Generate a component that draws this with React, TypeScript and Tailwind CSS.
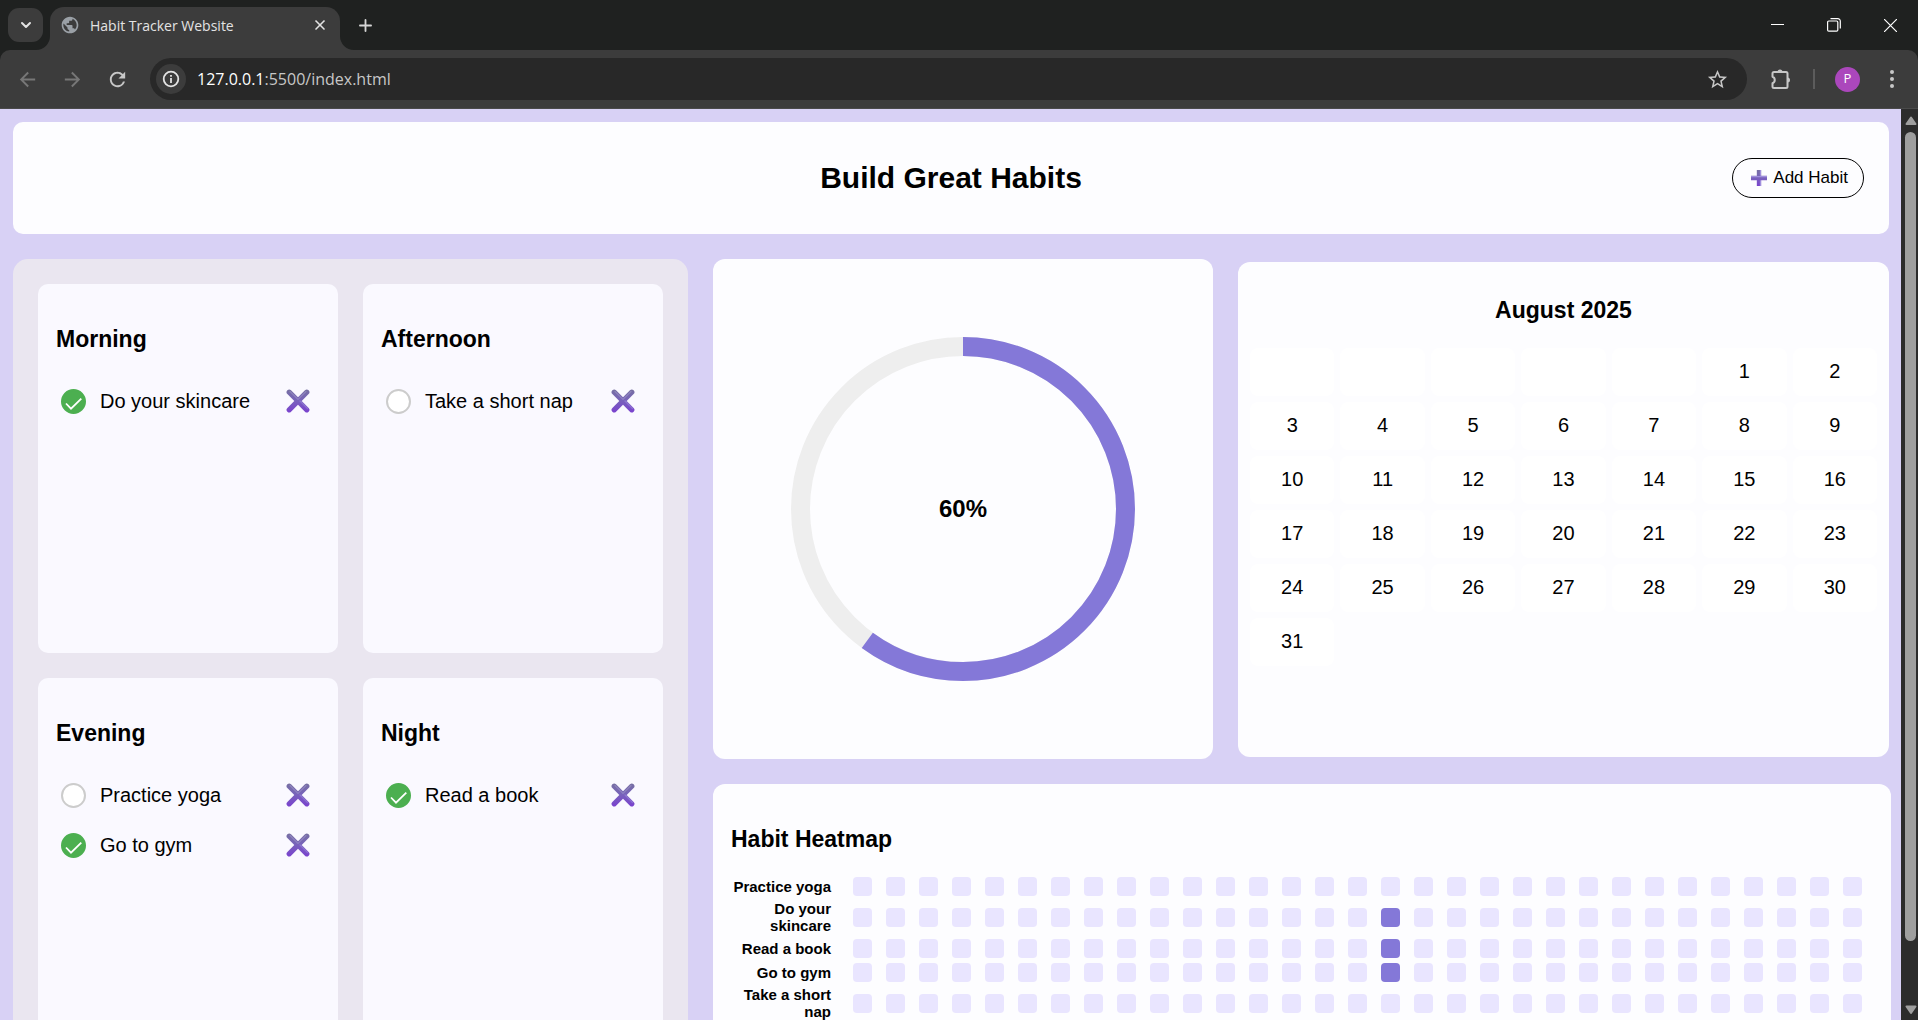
import React, { useState } from "react";
import { ChevronDown, Plus, X } from "lucide-react";
import { MdArrowBack, MdArrowForward, MdPublic, MdRefresh, MdStarBorder } from "react-icons/md";

type Habit = { name: string; done: boolean };
type Period = { title: string; habits: Habit[] };

const PERIODS: Period[] = [
  { title: "Morning", habits: [{ name: "Do your skincare", done: true }] },
  { title: "Afternoon", habits: [{ name: "Take a short nap", done: false }] },
  {
    title: "Evening",
    habits: [
      { name: "Practice yoga", done: false },
      { name: "Go to gym", done: true },
    ],
  },
  { title: "Night", habits: [{ name: "Read a book", done: true }] },
];

const HEATMAP: { name: string; filled: number[] }[] = [
  { name: "Practice yoga", filled: [] },
  { name: "Do your skincare", filled: [17] },
  { name: "Read a book", filled: [17] },
  { name: "Go to gym", filled: [17] },
  { name: "Take a short nap", filled: [] },
];

const DAYS = Array.from({ length: 31 }, (_, i) => i + 1);

function calendarWeeks(offset: number, total: number) {
  const cells: (number | null)[] = [];
  for (let i = 0; i < offset; i++) cells.push(null);
  for (let d = 1; d <= total; d++) cells.push(d);
  const weeks: (number | null)[][] = [];
  for (let i = 0; i < cells.length; i += 7) weeks.push(cells.slice(i, i + 7));
  return weeks;
}

function GradientDefs() {
  return (
    <svg width="0" height="0" className="absolute" aria-hidden="true">
      <defs>
        <linearGradient id="violet" gradientUnits="userSpaceOnUse" x1="0" y1="0" x2="0" y2="24">
          <stop offset="0" stopColor="#7670a0" />
          <stop offset="0.45" stopColor="#7864ba" />
          <stop offset="1" stopColor="#7a40d0" />
        </linearGradient>
      </defs>
    </svg>
  );
}

function CrossIcon() {
  return (
    <svg width="24" height="24" viewBox="0 0 24 24" fill="none" strokeLinecap="round" aria-hidden="true">
      <path d="M3.2 3.2 20.8 20.8M20.8 3.2 3.2 20.8" stroke="url(#violet)" strokeWidth="5.2" />
      <path d="M4 2.500 12 10.500 20 2.500" stroke="#a39bd0" strokeWidth="1.2" opacity="0.5" />
      <path d="M14 12 21.500 19.500" stroke="#9a86dc" strokeWidth="1.2" opacity="0.6" />
    </svg>
  );
}

function PlusIcon() {
  return (
    <svg width="16" height="16" viewBox="1 1 22 22" fill="none" aria-hidden="true">
      <path d="M9 1h6v8h8v6h-8v8H9v-8H1V9h8z" fill="url(#violet)" />
      <path d="M1 10h22M14 1v8M14 15v8" stroke="#a08fdd" strokeWidth="1.6" />
    </svg>
  );
}

function ExtensionIcon() {
  return (
    <svg width="24" height="24" viewBox="0 0 24 24" aria-hidden="true">
      <path
        d="M5 5h12a1.5 1.5 0 0 1 1.500 1.500v13a1.500 1.500 0 0 1-1.500 1.500H5a1.500 1.500 0 0 1-1.500-1.500v-3.300a3.400 3.400 0 0 0 0-6.400V6.500A1.500 1.500 0 0 1 5 5z"
        fill="none"
        stroke="#c7c7c7"
        strokeWidth="2"
        strokeLinejoin="round"
      />
      <path d="M8.500 5a2.500 2.500 0 0 1 5 0zM18.500 10.500a2.500 2.500 0 0 1 0 5z" fill="#c7c7c7" />
    </svg>
  );
}

function TabFlare({ flip = false }: { flip?: boolean }) {
  return (
    <svg width="14" height="14" viewBox="0 0 14 14" className={flip ? "self-end -scale-x-100" : "self-end"} aria-hidden="true">
      <path d="M14 0v14H0A14 14 0 0 0 14 0z" fill="#3c3c3c" />
    </svg>
  );
}

function BrowserChrome() {
  return (
    <header className="shrink-0 bg-[#1f2120] font-['Open_Sans','Noto_Sans',sans-serif]">
      <div className="flex h-[50px] items-center pl-2">
        <button aria-label="Search tabs" className="flex h-[34px] w-[35px] items-center justify-center rounded-[11px] bg-[#3c3c3c] text-[#e3e3e3]">
          <ChevronDown size={16} strokeWidth={3} />
        </button>
        <div className="-ml-[7px] flex h-full pt-[7px]">
          <TabFlare />
          <div className="flex w-[290px] items-center rounded-t-[14px] bg-[#3c3c3c] pr-3 pb-[7px] pl-[10px]">
            <MdPublic size={20} color="#9aa0a6" />
            <span className="ml-[10px] flex-1 text-[14px] text-[#e3e3e3]">Habit Tracker Website</span>
            <button aria-label="Close tab" className="text-[#e3e3e3]">
              <X size={16} strokeWidth={2.500} />
            </button>
          </div>
          <TabFlare flip />
        </div>
        <button aria-label="New tab" className="ml-[2px] text-[#d6d6d6]">
          <Plus size={19} strokeWidth={2.300} />
        </button>
        <div className="ml-auto flex items-center gap-[43px] pr-[21px] text-white">
          <button aria-label="Minimize">
            <svg width="13" height="13" viewBox="0 0 13 13" fill="none" stroke="currentColor" aria-hidden="true">
              <path d="M0 5.500h13" />
            </svg>
          </button>
          <button aria-label="Restore">
            <svg width="14" height="14" viewBox="0 0 14 14" fill="none" stroke="currentColor" strokeWidth="1.200" aria-hidden="true">
              <rect x="0.600" y="3" width="10.200" height="10.200" rx="1.200" />
              <path d="M3.500 0.700h7.300a2.500 2.500 0 0 1 2.500 2.500v7.300" />
            </svg>
          </button>
          <button aria-label="Close window">
            <svg width="13" height="13" viewBox="0 0 13 13" fill="none" stroke="currentColor" strokeWidth="1.200" aria-hidden="true">
              <path d="M0 0 13 13M13 0 0 13" />
            </svg>
          </button>
        </div>
      </div>
      <div className="flex h-[59px] items-center rounded-t-[10px] border-b border-[#4a4a4a] bg-[#3c3c3c] pr-4 pl-4">
        <div className="flex w-[134px] items-center gap-[22px]">
          <button aria-label="Back" className="text-[#777777]">
            <MdArrowBack size={23} />
          </button>
          <button aria-label="Forward" className="text-[#777777]">
            <MdArrowForward size={23} />
          </button>
          <button aria-label="Reload" className="text-[#c7c7c7]">
            <MdRefresh size={23} />
          </button>
        </div>
        <div className="flex h-[42px] flex-1 items-center rounded-full bg-[#282828] pr-[18px] pl-[6px]">
          <button aria-label="View site information" className="flex size-[30px] items-center justify-center rounded-full bg-[#3c3c3c]">
            <svg width="18" height="18" viewBox="0 0 18 18" fill="none" stroke="#e3e3e3" strokeWidth="1.800" aria-hidden="true">
              <circle cx="9" cy="9" r="7.300" />
              <path d="M9 8v5M9 5v1.800" />
            </svg>
          </button>
          <div className="ml-[11px] flex-1 text-[16px] leading-6 text-[#c7c7c7]">
            <span className="text-white">127.0.0.1</span>:5500/index.html
          </div>
          <button aria-label="Bookmark this tab" className="text-[#c7c7c7]">
            <MdStarBorder size={23} />
          </button>
        </div>
        <button aria-label="Extensions" className="ml-[22px]">
          <ExtensionIcon />
        </button>
        <span className="ml-5 h-5 w-[2px] bg-[#5c5c5c]" />
        <button aria-label="Profile" className="ml-5 flex size-[25px] items-center justify-center rounded-full bg-[#ab47bc] text-[13px] text-white">
          P
        </button>
        <button aria-label="Menu" className="ml-[22px]">
          <svg width="20" height="20" viewBox="0 0 20 20" fill="#c7c7c7" aria-hidden="true">
            <circle cx="10" cy="3" r="2" />
            <circle cx="10" cy="10" r="2" />
            <circle cx="10" cy="17" r="2" />
          </svg>
        </button>
      </div>
    </header>
  );
}

function HabitRow({ habit }: { habit: Habit }) {
  const [done, setDone] = useState(habit.done);
  return (
    <li className="flex h-[50px] items-center pr-[10px] pl-[5px]">
      <label className="flex flex-1 items-center gap-[14px] text-[20px] leading-[23px]">
        <span className="relative flex size-[25px]">
          <input
            type="checkbox"
            checked={done}
            onChange={() => setDone(!done)}
            className="size-[25px] appearance-none rounded-full border-2 border-[#cccccc] bg-white checked:border-[#4caf50] checked:bg-[#4caf50]"
          />
          {done && (
            <svg viewBox="0 0 25 25" className="pointer-events-none absolute inset-0" fill="none" stroke="#fff" strokeWidth="1.800" aria-hidden="true">
              <path d="M5 14.500 10 19.700 20.300 9.700" />
            </svg>
          )}
        </span>
        {habit.name}
      </label>
      <button aria-label={"Delete " + habit.name}>
        <CrossIcon />
      </button>
    </li>
  );
}

function PeriodCard({ period }: { period: Period }) {
  return (
    <section className="min-h-[369px] rounded-[10px] bg-[#faf9ff] px-[18px] pt-[42px]">
      <h3 className="mb-[23px] text-[23px] leading-[27px] font-bold">{period.title}</h3>
      <ul>
        {period.habits.map((h) => (
          <HabitRow key={h.name} habit={h} />
        ))}
      </ul>
    </section>
  );
}

function ProgressRing({ percent }: { percent: number }) {
  const radius = 162.5;
  const length = 2 * Math.PI * radius;
  return (
    <section className="grid h-[500px] place-items-center rounded-[12px] bg-[#fdfdff]">
      <svg width="344" height="344" viewBox="0 0 344 344" className="col-start-1 row-start-1 -rotate-90" fill="none" strokeWidth="19" aria-hidden="true">
        <circle cx="172" cy="172" r={radius} stroke="#eeeeee" />
        <circle cx="172" cy="172" r={radius} stroke="#8478d8" strokeDasharray={`${(length * percent) / 100} ${length}`} />
      </svg>
      <p className="col-start-1 row-start-1 text-[24px] leading-7 font-bold">{percent}%</p>
    </section>
  );
}

function Calendar() {
  return (
    <section className="h-[495px] self-center rounded-[12px] bg-[#fdfdff] px-[6px] pt-[35px]">
      <h3 className="mb-[18px] text-center text-[23px] leading-[27px] font-bold">August 2025</h3>
      <table className="w-full table-fixed border-separate border-spacing-[6px] text-center text-[20px] leading-[23px]" aria-label="August 2025">
        <tbody>
          {calendarWeeks(5, 31).map((week, w) => (
            <tr key={w}>
              {week.map((day, d) => (
                <td key={d} className="h-12 rounded-[8px] bg-white">
                  {day}
                </td>
              ))}
            </tr>
          ))}
        </tbody>
      </table>
    </section>
  );
}

function Heatmap() {
  return (
    <section className="col-span-2 -mr-[2px] rounded-[12px] bg-[#fdfdff] pt-[42px] pr-[22px] pl-[18px]">
      <h3 className="mb-[21px] text-[23px] leading-[27px] font-bold">Habit Heatmap</h3>
      <table className="w-full table-fixed" aria-label="Habit Heatmap">
        <colgroup>
          <col className="w-[115px]" />
          {DAYS.map((d) => (
            <col key={d} />
          ))}
        </colgroup>
        <tbody>
          {HEATMAP.map((row) => (
            <tr key={row.name}>
              <th scope="row" className="h-6 py-[2px] pr-[15px] text-right text-[15px] leading-[17px] font-bold">
                {row.name}
              </th>
              {DAYS.map((d) => (
                <td key={d}>
                  <div className={row.filled.includes(d) ? "mx-auto size-[19px] rounded-[4px] bg-[#8478d8]" : "mx-auto size-[19px] rounded-[4px] bg-[#e9e5ff]"} />
                </td>
              ))}
            </tr>
          ))}
        </tbody>
      </table>
    </section>
  );
}

function ScrollBar() {
  return (
    <div className="flex w-[17px] shrink-0 flex-col items-center bg-[#2c2c2c] py-[5px] pl-[2px]" aria-hidden="true">
      <svg width="12" height="12" viewBox="0 0 12 12" fill="#9f9f9f" stroke="#9f9f9f" strokeLinejoin="round" strokeWidth="2">
        <path d="M1.500 10 6 3.500 10.500 10z" />
      </svg>
      <div className="mt-[6px] mb-16 w-[11px] flex-1 rounded-full bg-[#9f9f9f]" />
      <svg width="12" height="10" viewBox="0 0 12 10" fill="#9f9f9f" stroke="#9f9f9f" strokeLinejoin="round" strokeWidth="2">
        <path d="M1.500 1.500 6 8 10.500 1.500z" />
      </svg>
    </div>
  );
}

export default function App() {
  return (
    <div className="flex h-screen flex-col overflow-hidden">
      <GradientDefs />
      <BrowserChrome />
      <div className="flex min-h-0 flex-1">
        <main className="min-w-0 flex-1 overflow-hidden bg-[#d8d1f5] p-3 pt-[13px] pl-[13px] font-['Liberation_Sans',Arial,sans-serif] text-black">
          <div className="grid h-28 grid-cols-[1fr_auto_1fr] items-center rounded-[10px] bg-[#fdfdff] px-[25px]">
            <h1 className="col-start-2 text-[30px] leading-9 font-bold">Build Great Habits</h1>
            <button className="flex h-10 items-center gap-[6px] justify-self-end rounded-full border border-black pr-[15px] pl-[18px] text-[17px]">
              <PlusIcon />
              Add Habit
            </button>
          </div>
          <div className="mt-[25px] grid grid-cols-[675px_500px_minmax(0,1fr)] grid-rows-[auto_1fr] gap-[25px]">
            <div className="row-span-2 grid grid-cols-2 gap-[25px] rounded-[15px] bg-[#eae6f0] p-[25px]">
              {PERIODS.map((p) => (
                <PeriodCard key={p.title} period={p} />
              ))}
            </div>
            <ProgressRing percent={60} />
            <Calendar />
            <Heatmap />
          </div>
        </main>
        <ScrollBar />
      </div>
    </div>
  );
}
